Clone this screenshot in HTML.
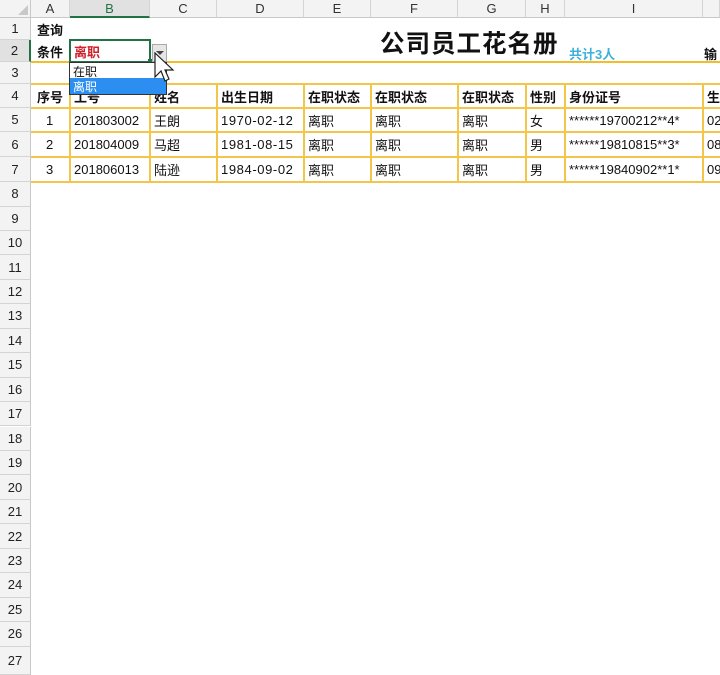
<!DOCTYPE html>
<html><head><meta charset="utf-8"><style>
*{margin:0;padding:0;box-sizing:border-box}
body{width:720px;height:675px;overflow:hidden;background:#fff;position:relative;font-family:"Liberation Sans","Noto Sans CJK SC",sans-serif;font-size:13px;color:#111}
.a{position:absolute}
.ch{position:absolute;top:0;height:18px;background:#f3f3f3;border-right:1px solid #d4d4d4;border-bottom:1px solid #c8c8c8;text-align:center;line-height:18px;font-size:13px;color:#333}
.rh{position:absolute;left:0;width:31px;background:#f3f3f3;border-right:1px solid #c8c8c8;border-bottom:1px solid #d4d4d4;text-align:center;font-size:13px;color:#222;display:flex;align-items:center;justify-content:center}
.c{position:absolute;display:flex;align-items:center;padding-left:3px;white-space:nowrap;font-size:13px}
.b{font-weight:bold}
.d{letter-spacing:0.6px}
.hl{position:absolute;height:2px;background:#f3c64a}
.vl{position:absolute;width:2px;background:#f3c64a}
</style></head><body>
<div class="a" style="left:0;top:0;width:31px;height:18px;background:#f3f3f3;border-right:1px solid #c8c8c8;border-bottom:1px solid #c8c8c8"></div>
<div class="a" style="left:18px;top:5px;width:0;height:0;border-left:10px solid transparent;border-bottom:10px solid #c8c8c8"></div>
<div class="ch" style="left:31px;width:39px">A</div>
<div class="ch" style="left:70px;width:80px;background:#e1e1e1;border-bottom:2px solid #217346;color:#217346">B</div>
<div class="ch" style="left:150px;width:67px">C</div>
<div class="ch" style="left:217px;width:87px">D</div>
<div class="ch" style="left:304px;width:67px">E</div>
<div class="ch" style="left:371px;width:87px">F</div>
<div class="ch" style="left:458px;width:68px">G</div>
<div class="ch" style="left:526px;width:39px">H</div>
<div class="ch" style="left:565px;width:138px">I</div>
<div class="ch" style="left:703px;width:17px"></div>
<div class="rh" style="top:18px;height:22px">1</div>
<div class="rh" style="top:40px;height:22px;background:#e1e1e1;border-right:2px solid #217346">2</div>
<div class="rh" style="top:62px;height:22px">3</div>
<div class="rh" style="top:84px;height:24px">4</div>
<div class="rh" style="top:108px;height:24px">5</div>
<div class="rh" style="top:132px;height:25px">6</div>
<div class="rh" style="top:157px;height:25px">7</div>
<div class="rh" style="top:182px;height:24.5px">8</div>
<div class="rh" style="top:206.5px;height:24.5px">9</div>
<div class="rh" style="top:231px;height:24.4px">10</div>
<div class="rh" style="top:255.4px;height:24.4px">11</div>
<div class="rh" style="top:279.8px;height:24.5px">12</div>
<div class="rh" style="top:304.3px;height:24.4px">13</div>
<div class="rh" style="top:328.7px;height:24.5px">14</div>
<div class="rh" style="top:353.2px;height:24.4px">15</div>
<div class="rh" style="top:377.6px;height:24.5px">16</div>
<div class="rh" style="top:402.1px;height:24.4px">17</div>
<div class="rh" style="top:426.5px;height:24.5px">18</div>
<div class="rh" style="top:451px;height:24.4px">19</div>
<div class="rh" style="top:475.4px;height:24.5px">20</div>
<div class="rh" style="top:499.9px;height:24.4px">21</div>
<div class="rh" style="top:524.3px;height:24.5px">22</div>
<div class="rh" style="top:548.8px;height:24.4px">23</div>
<div class="rh" style="top:573.2px;height:24.5px">24</div>
<div class="rh" style="top:597.7px;height:24.4px">25</div>
<div class="rh" style="top:622.1px;height:24.5px">26</div>
<div class="rh" style="top:646.6px;height:28.4px">27</div>

<div class="c b" style="left:34px;top:18px;height:22px">查询</div>
<div class="c b" style="left:34px;top:40px;height:22px">条件</div>
<div class="a b" style="left:380px;top:25px;font-size:24.5px;letter-spacing:1px">公司员工花名册</div>
<div class="a b" style="left:569px;top:44px;font-size:13px;color:#3fb1dc">共计3人</div>
<div class="a b" style="left:704px;top:44px;font-size:13px">输</div>
<div class="hl" style="left:31px;top:61px;width:689px;background:#f1bd2b"></div>

<div class="hl" style="left:31px;top:83px;width:689px"></div>
<div class="hl" style="left:31px;top:107px;width:689px"></div>
<div class="hl" style="left:31px;top:131px;width:689px"></div>
<div class="hl" style="left:31px;top:156px;width:689px"></div>
<div class="hl" style="left:31px;top:181px;width:689px"></div>
<div class="vl" style="left:69px;top:83px;height:100px"></div>
<div class="vl" style="left:149px;top:83px;height:100px"></div>
<div class="vl" style="left:216px;top:83px;height:100px"></div>
<div class="vl" style="left:303px;top:83px;height:100px"></div>
<div class="vl" style="left:370px;top:83px;height:100px"></div>
<div class="vl" style="left:457px;top:83px;height:100px"></div>
<div class="vl" style="left:525px;top:83px;height:100px"></div>
<div class="vl" style="left:564px;top:83px;height:100px"></div>
<div class="vl" style="left:702px;top:83px;height:100px"></div>

<div class="c b" style="left:34px;top:84px;height:24px">序号</div>
<div class="c b" style="left:71px;top:84px;height:24px">工号</div>
<div class="c b" style="left:151px;top:84px;height:24px">姓名</div>
<div class="c b" style="left:218px;top:84px;height:24px">出生日期</div>
<div class="c b" style="left:305px;top:84px;height:24px">在职状态</div>
<div class="c b" style="left:372px;top:84px;height:24px">在职状态</div>
<div class="c b" style="left:459px;top:84px;height:24px">在职状态</div>
<div class="c b" style="left:527px;top:84px;height:24px">性别</div>
<div class="c b" style="left:566px;top:84px;height:24px">身份证号</div>
<div class="c b" style="left:704px;top:84px;height:24px">生日</div>

<div class="c" style="left:43px;top:108px;height:24px">1</div>
<div class="c" style="left:71px;top:108px;height:24px">201803002</div>
<div class="c" style="left:151px;top:108px;height:24px">王朗</div>
<div class="c d" style="left:218px;top:108px;height:24px">1970-02-12</div>
<div class="c" style="left:305px;top:108px;height:24px">离职</div>
<div class="c" style="left:372px;top:108px;height:24px">离职</div>
<div class="c" style="left:459px;top:108px;height:24px">离职</div>
<div class="c" style="left:527px;top:108px;height:24px">女</div>
<div class="c" style="left:566px;top:108px;height:24px">******19700212**4*</div>
<div class="c" style="left:704px;top:108px;height:24px">02</div>

<div class="c" style="left:43px;top:132px;height:25px">2</div>
<div class="c" style="left:71px;top:132px;height:25px">201804009</div>
<div class="c" style="left:151px;top:132px;height:25px">马超</div>
<div class="c d" style="left:218px;top:132px;height:25px">1981-08-15</div>
<div class="c" style="left:305px;top:132px;height:25px">离职</div>
<div class="c" style="left:372px;top:132px;height:25px">离职</div>
<div class="c" style="left:459px;top:132px;height:25px">离职</div>
<div class="c" style="left:527px;top:132px;height:25px">男</div>
<div class="c" style="left:566px;top:132px;height:25px">******19810815**3*</div>
<div class="c" style="left:704px;top:132px;height:25px">08</div>

<div class="c" style="left:43px;top:157px;height:25px">3</div>
<div class="c" style="left:71px;top:157px;height:25px">201806013</div>
<div class="c" style="left:151px;top:157px;height:25px">陆逊</div>
<div class="c d" style="left:218px;top:157px;height:25px">1984-09-02</div>
<div class="c" style="left:305px;top:157px;height:25px">离职</div>
<div class="c" style="left:372px;top:157px;height:25px">离职</div>
<div class="c" style="left:459px;top:157px;height:25px">离职</div>
<div class="c" style="left:527px;top:157px;height:25px">男</div>
<div class="c" style="left:566px;top:157px;height:25px">******19840902**1*</div>
<div class="c" style="left:704px;top:157px;height:25px">09</div>

<div class="a" style="left:69px;top:39px;width:82px;height:24px;border:2px solid #217346;background:#fff"></div>
<div class="c b" style="left:71px;top:40px;height:22px;color:#d0202a">离职</div>
<div class="a" style="left:148px;top:59px;width:5px;height:5px;background:#217346"></div>
<div class="a" style="left:152px;top:44px;width:15px;height:18px;background:#e6e6e6;border:1px solid #aaa"></div>
<div class="a" style="left:156px;top:51px;width:0;height:0;border-left:4px solid transparent;border-right:4px solid transparent;border-top:4px solid #444"></div>
<div class="a" style="left:69px;top:62px;width:98px;height:33px;border:1px solid #333;background:#fff"></div>
<div class="a" style="left:73px;top:63px;font-size:12px">在职</div>
<div class="a" style="left:70px;top:78px;width:96px;height:16px;background:#2b8ef0"></div>
<div class="a" style="left:73px;top:78px;font-size:12px;color:#fff">离职</div>
<svg class="a" style="left:154px;top:52px" width="24" height="34" viewBox="0 0 24 34">
<path d="M1 1 L1 25 L7 19 L11 29 L15 27 L11 18 L19 18 Z" fill="#fff" stroke="#222" stroke-width="1.2"/>
</svg>
</body></html>
